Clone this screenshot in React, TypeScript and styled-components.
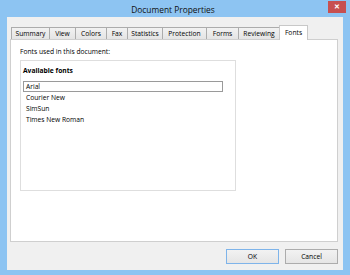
import React from "react";
import styled, { createGlobalStyle, css } from "styled-components";

const GlobalStyle = createGlobalStyle`
  html, body {
    margin: 0;
    padding: 0;
    background: #ffffff;
  }
  body {
    font-family: "Open Sans", "Noto Sans", "Liberation Sans", sans-serif;
    color: #000000;
  }
`;

const Window = styled.div`
  width: 350px;
  height: 275px;
  background: #8dc4f2;
  display: flex;
  flex-direction: column;
  box-sizing: border-box;
`;

const TitleBar = styled.div`
  height: 17px;
  display: grid;
  grid-template-columns: 1fr auto 1fr;
  align-items: start;
  padding-right: 4px;
`;

const Title = styled.div`
  grid-column: 2;
  font-size: 8.4px;
  line-height: 19px;
  color: #111111;
  white-space: nowrap;
`;

const CloseBtn = styled.div`
  grid-column: 3;
  justify-self: end;
  width: 18px;
  height: 12px;
  margin-top: 1px;
  background: #c75050;
  color: #ffffff;
  font-size: 7px;
  line-height: 12px;
  text-align: center;
  font-weight: bold;
`;

const Client = styled.div`
  flex: 1;
  margin: 0 7px 5px;
  background: #f0f0f0;
  display: flex;
  flex-direction: column;
  padding: 9px 5px 6px 3px;
  min-height: 0;
`;

const TabStrip = styled.div`
  height: 14px;
  display: flex;
  align-items: flex-end;
  padding-left: 2px;
  position: relative;
  z-index: 1;
  margin-bottom: -1px;
`;

const Tab = styled.div<{ $w: number; $active?: boolean }>`
  width: ${(p) => p.$w}px;
  box-sizing: border-box;
  height: 12px;
  margin-bottom: 1px;
  border: 1px solid #acacac;
  border-bottom: none;
  margin-left: -1px;
  background: linear-gradient(#f2f2f2, #e4e4e4);
  font-size: 6.7px;
  line-height: 11px;
  color: #000000;
  text-align: center;
  white-space: nowrap;
  ${(p) =>
    p.$active &&
    css`
      height: 15px;
      margin-bottom: 0;
      background: #ffffff;
      border-color: #c8c8c8;
      line-height: 13px;
    `}
`;

const Panel = styled.div`
  flex: 1;
  background: #ffffff;
  border: 1px solid #cfcfcf;
  padding: 7px 9px;
  min-height: 0;
`;

const Caption = styled.div`
  font-size: 6.7px;
  line-height: 10px;
`;

const GroupBox = styled.div`
  margin-top: 3px;
  width: 216px;
  height: 131px;
  box-sizing: border-box;
  border: 1px solid #dedede;
  padding: 5px 12px 0 2px;
`;

const GroupLabel = styled.div`
  font-size: 6.7px;
  font-weight: bold;
  line-height: 10px;
  margin-bottom: 5px;
`;

const FontItem = styled.div<{ $focused?: boolean }>`
  height: 11px;
  box-sizing: border-box;
  font-size: 6.7px;
  line-height: 9px;
  padding-left: 2px;
  border: 1px solid ${(p) => (p.$focused ? "#9a9a9a" : "transparent")};
`;

const ButtonRow = styled.div`
  display: flex;
  justify-content: flex-end;
  gap: 6px;
  margin-top: 7px;
`;

const Button = styled.div<{ $default?: boolean }>`
  width: 53px;
  height: 15px;
  box-sizing: border-box;
  border: 1px solid ${(p) => (p.$default ? "#7eb4ea" : "#acacac")};
  background: linear-gradient(#f2f2f2, #e5e5e5);
  font-size: 6.7px;
  line-height: 13px;
  text-align: center;
`;

const tabs: { label: string; w: number }[] = [
  { label: "Summary", w: 39 },
  { label: "View", w: 27 },
  { label: "Colors", w: 32 },
  { label: "Fax", w: 22 },
  { label: "Statistics", w: 36 },
  { label: "Protection", w: 45 },
  { label: "Forms", w: 33 },
  { label: "Reviewing", w: 42 },
  { label: "Fonts", w: 29 },
];

const fonts = ["Arial", "Courier New", "SimSun", "Times New Roman"];

export default function App() {
  return (
    <>
      <GlobalStyle />
      <Window>
        <TitleBar>
          <Title>Document Properties</Title>
          <CloseBtn>✕</CloseBtn>
        </TitleBar>
        <Client>
          <TabStrip>
            {tabs.map((t) => (
              <Tab key={t.label} $w={t.w} $active={t.label === "Fonts"}>
                {t.label}
              </Tab>
            ))}
          </TabStrip>
          <Panel>
            <Caption>Fonts used in this document:</Caption>
            <GroupBox>
              <GroupLabel>Available fonts</GroupLabel>
              {fonts.map((f, i) => (
                <FontItem key={f} $focused={i === 0}>
                  {f}
                </FontItem>
              ))}
            </GroupBox>
          </Panel>
          <ButtonRow>
            <Button $default>OK</Button>
            <Button>Cancel</Button>
          </ButtonRow>
        </Client>
      </Window>
    </>
  );
}
